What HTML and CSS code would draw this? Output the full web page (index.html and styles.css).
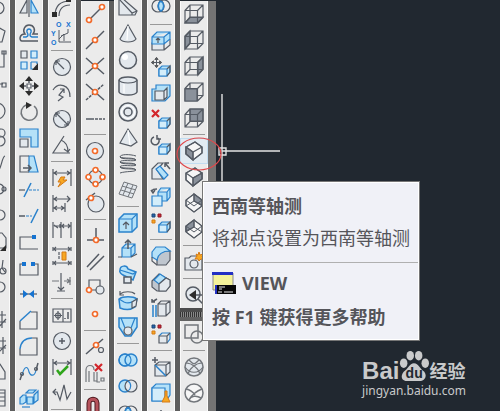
FILE: index.html
```html
<!DOCTYPE html>
<html lang="zh-CN">
<head>
    <meta charset="UTF-8">
    <meta name="viewport" content="width=device-width, initial-scale=1.0">
    <title>西南等轴测</title>
    <link rel="stylesheet" href="styles.css">
</head>
<body>
    <!-- shapes shared by several buttons -->
    <svg class="shapes" aria-hidden="true">
        <symbol id="cube" viewBox="0 0 20 20"><path d="M1 6.500H13.500V19H1ZM6 1H19V13.500H6ZM1 6.500L6 1M13.500 6.500L19 1M13.500 19L19 13.500M1 19L6 13.500"/></symbol>
        <symbol id="iso" viewBox="0 0 20 20"><path d="M11 1L18 6V12L9 19L2 13V6ZM2 6L9 11L18 6M9 11V19"/></symbol>
        <symbol id="box" viewBox="0 0 20 20"><path class="sky blue" d="M8 12L11 9H19V15L16 19H8Z"/><path class="ice" d="M8 12H16V19H8Z"/><path d="M16 12L19 9V15L16 19"/></symbol>
        <symbol id="squares" viewBox="0 0 20 20"><path class="navy" d="M1 1H4V4H1Z"/><path class="crimson" d="M7 1H10V4H7Z"/><path class="amber" d="M1 7H4V10H1Z"/></symbol>
        <symbol id="move" viewBox="0 0 20 20"><path class="bold" d="M10 2V7M10 13V18M2 10H7M13 10H18"/><path class="solid" d="M6 5L10 0L14 5ZM6 15L10 20L14 15ZM5 6L0 10L5 14ZM15 6L20 10L15 14Z"/></symbol>
    </svg>

    <main class="workspace">
        <nav class="toolbar first" aria-label="绘图">
            <button class="tool" aria-label="圆"><svg viewBox="0 0 20 20"><circle cx="12" cy="10" r="6"/></svg></button>
            <button class="tool" aria-label="多边形"><svg viewBox="0 0 20 20"><path d="M10 2L19 7L16 18H4L1 7Z"/></svg></button>
            <button class="tool" aria-label="多段线"><svg viewBox="0 0 20 20"><path d="M18 1V17H10M16 1H20V4H16Z"/></svg></button>
            <button class="tool" aria-label="矩形"><svg viewBox="0 0 20 20"><path d="M8 8H17M16 7H20V11H16Z"/></svg></button>
            <button class="tool" aria-label="圆弧"><svg viewBox="0 0 20 20"><circle cx="11" cy="9" r="8"/></svg></button>
            <button class="tool" aria-label="修订云线"><svg viewBox="0 0 20 20"><circle cx="15" cy="5" r="4"/><circle cx="14" cy="13" r="5"/></svg></button>
            <button class="tool" aria-label="样条曲线"><svg viewBox="0 0 20 20"><path d="M8 18C16 20 15 3 19 2"/></svg></button>
            <button class="tool" aria-label="椭圆"><svg viewBox="0 0 20 20"><circle cx="13" cy="9" r="5"/><circle cx="18" cy="9" r="2"/></svg></button>
            <button class="tool" aria-label="椭圆弧"><svg viewBox="0 0 20 20"><circle cx="14" cy="9" r="5"/></svg></button>
            <button class="tool" aria-label="插入块"><svg viewBox="0 0 20 20"><path d="M10 1H16L20 6V16H10Z"/><path class="solid" d="M14 19L20 13V19Z"/></svg></button>
            <button class="tool" aria-label="创建块"><svg viewBox="0 0 20 20"><path d="M17 2L16 10L19 14"/><circle cx="17" cy="13" r="3"/></svg></button>
            <button class="tool" aria-label="点"><svg viewBox="0 0 20 20"><circle cx="14" cy="3" r="5"/></svg></button>
            <button class="tool" aria-label="图案填充"><svg viewBox="0 0 20 20"><path d="M12 5H20M12 12H20M16 1V18M12 18L20 9"/></svg></button>
            <button class="tool" aria-label="渐变色"><svg viewBox="0 0 20 20"><path d="M12 5H20M12 12H20M17 1V18M12 17L20 9"/></svg></button>
            <button class="tool" aria-label="面域"><svg viewBox="0 0 20 20"><path d="M10 2H14L19 10V17H10"/></svg></button>
            <button class="tool" aria-label="表格"><svg viewBox="0 0 20 20"><path d="M8 2H19V18H8M8 5H19M8 9H19M8 13H19M13 5V18"/></svg></button>
        </nav>

        <nav class="toolbar" aria-label="修改">
            <button class="tool" aria-label="镜像"><svg viewBox="0 0 20 20"><path class="pale" d="M8 2V15H1Z"/><path class="sky blue" d="M12 2V15H19Z"/><path d="M10 0V19"/></svg></button>
            <button class="tool" aria-label="偏移"><svg viewBox="0 0 20 20"><path class="bold" d="M3 17C0 17 0 10 6 10C3 6 6 1 10 1C15 1 17 6 14 10H19M3 17H19"/><path class="blue bold" d="M19 13H13C10 12 11 10 12 8C13 4 7 4 8 8C9 10 10 12 7 13H4"/></svg></button>
            <button class="tool" aria-label="阵列"><svg viewBox="0 0 20 20"><path class="pale" d="M2 1H8V8H2Z"/><path class="ice" d="M12 1H18V8H12ZM2 12H8V19H2Z"/><path class="blue" d="M12 12H18V14M12 12V19H14"/><path class="solid" d="M19 13V20H13Z"/></svg></button>
            <button class="tool" aria-label="移动"><svg viewBox="0 0 20 20"><use href="#move"/><path class="paper" d="M8 8H12V12H8Z"/></svg></button>
            <button class="tool" aria-label="旋转"><svg viewBox="0 0 20 20"><path class="grey bold" d="M7 3A8 8 0 1 0 15 4"/><path class="solid" d="M7 0L13 3L7 7Z"/></svg></button>
            <button class="tool" aria-label="缩放"><svg viewBox="0 0 20 20"><path class="sky blue" d="M1 1H19V19H12V9H1Z"/><path class="pale" d="M1 11H9V19H1Z"/></svg></button>
            <button class="tool" aria-label="拉伸"><svg viewBox="0 0 20 20"><path class="sky blue" d="M10 2H15L19 18H10Z"/><path d="M10 18H1V2H10"/><path class="bold" d="M4 14H12M9 11L12 14L9 17"/></svg></button>
            <button class="tool" aria-label="修剪"><svg viewBox="0 0 20 20"><path d="M0 10H6"/><path class="blue bold" d="M5 17L12 3"/><path class="blue dash" d="M10 10H20"/></svg></button>
            <button class="tool" aria-label="延伸"><svg viewBox="0 0 20 20"><path class="bold" d="M0 10H6"/><path class="blue dash" d="M7 10H13"/><path class="blue bold" d="M12 17L19 3"/></svg></button>
            <button class="tool" aria-label="打断于点"><svg viewBox="0 0 20 20"><path d="M15 5H1V17H19"/><path class="bluefill" d="M13 3H17V7H13Z"/></svg></button>
            <button class="tool" aria-label="打断"><svg viewBox="0 0 20 20"><path d="M4 6H1V17H19V6H15"/><path class="bluefill" d="M3 4H7V8H3ZM12 4H16V8H12Z"/></svg></button>
            <button class="tool" aria-label="合并"><svg viewBox="0 0 20 20"><path d="M1 10H18"/><path class="bluefill" d="M4 6L9 10L4 14ZM15 6L10 10L15 14Z"/></svg></button>
            <button class="tool" aria-label="倒角"><svg viewBox="0 0 20 20"><path d="M1 11V19H18V2H12"/><path class="blue bold" d="M1 11L12 1"/></svg></button>
            <button class="tool" aria-label="圆角"><svg viewBox="0 0 20 20"><path d="M1 13V19H18V2H13"/><path class="blue bold" d="M1 13C2 5 6 2 13 2"/></svg></button>
            <button class="tool" aria-label="光顺曲线"><svg viewBox="0 0 20 20"><path class="blue" d="M3 13C6 2 9 5 10 10C12 15 16 14 17 8"/><path class="bold" d="M1 18L3 12M17 8L19 1"/><circle cx="3" cy="12" r="1.500"/><circle cx="17" cy="7" r="1.500"/></svg></button>
            <button class="tool" aria-label="分解"><svg viewBox="0 0 20 20"><path class="sky blue" d="M1 10L4 7H7V14L4 16H1ZM7 5L10 2H17L14 5ZM8 9H14V16H8ZM15 7L19 3V12L15 15Z"/><path class="blue" d="M3 19H11"/></svg></button>
        </nav>

        <nav class="toolbar" aria-label="标注">
            <button class="tool" aria-label="弧长"><svg viewBox="0 0 20 20"><path d="M3 18C3 8 8 3 18 3M7 18C7 11 11 7 18 7"/><path class="solid" d="M0 14H5V19H0ZM14 0H19V4H14Z"/></svg></button>
            <button class="tool" aria-label="坐标"><svg viewBox="0 0 20 20"><path class="thin" d="M7 6V18H19M7 15L12 10V17M9 12L16 9V5"/><text x="4" y="3">O</text><text x="14" y="3">X</text><text x="-1" y="12">Y</text><text x="-1" y="21">O</text></svg></button>
            <hr>
            <button class="tool" aria-label="半径"><svg viewBox="0 0 20 20"><circle class="pale" cx="10" cy="10" r="8.500"/><path d="M12 12L4 4M4 8V4H8"/></svg></button>
            <button class="tool" aria-label="折弯"><svg viewBox="0 0 20 20"><path d="M1 7C6 -1 18 1 18 14"/><path d="M6 18L11 14L7 12L12 6M8 6H12V10"/></svg></button>
            <button class="tool" aria-label="直径"><svg viewBox="0 0 20 20"><circle class="pale" cx="10" cy="10" r="8.500"/><path d="M4 4L16 16M4 8V4H8M16 12V16H12"/></svg></button>
            <button class="tool" aria-label="角度"><svg viewBox="0 0 20 20"><path d="M18 18H1L12 1M9 5C14 7 16 12 16 17M12 14L16 17L18 14"/></svg></button>
            <hr>
            <button class="tool" aria-label="快速标注"><svg viewBox="0 0 20 20"><path d="M1 1V18M19 1V18M2 5H18M5 3L2 5L5 7M15 3L18 5L15 7"/><path class="amber" d="M9 9H13L11 12H15L6 19L9 14H6Z"/></svg></button>
            <button class="tool" aria-label="基线"><svg viewBox="0 0 20 20"><path d="M1 1V18M2 5H18M15 2L18 5L15 8M5 3L2 5L5 7M13 9V18M2 14H12M5 12L2 14L5 16M9 12L12 14L9 16"/></svg></button>
            <button class="tool" aria-label="连续"><svg viewBox="0 0 20 20"><path d="M1 2V18M9 2V18M19 2V18M2 6H18M2 5L6 8M8 4V8M12 4L10 6L12 8M16 4L18 6L16 8"/></svg></button>
            <button class="tool" aria-label="等距标注"><svg viewBox="0 0 20 20"><path d="M1 1V5M19 1V5M1 3H19M4 1L2 3L4 5M16 1L18 3L16 5M1 15V19M19 15V19M1 17H19M4 15L2 17L4 19M16 15L18 17L16 19"/><path class="dash" d="M7 6V14"/><path class="amber" d="M10 6H14V14H10Z"/></svg></button>
            <button class="tool" aria-label="折断标注"><svg viewBox="0 0 20 20"><path class="grey" d="M0 9H7M12 9H19M18 5V13M15 7L18 9L15 11"/><path d="M9 1V19M6 15L9 18L12 15M5 19H13"/></svg></button>
            <hr>
            <button class="tool" aria-label="公差"><svg viewBox="0 0 20 20"><path d="M1 4H19V17H1ZM11 4V17"/><circle cx="6" cy="10.500" r="2.500"/><path d="M2 10.500H10M6 6V15"/><path class="bold" d="M13 13V14M16 7V14"/></svg></button>
            <button class="tool" aria-label="圆心标记"><svg viewBox="0 0 20 20"><circle class="pale" cx="10" cy="10" r="8.500"/><path class="bold" d="M7 10H13M10 7V13"/></svg></button>
            <button class="tool" aria-label="检验"><svg viewBox="0 0 20 20"><path d="M1 2V18M19 2V18M2 6H18M5 4L2 6L5 8M15 4L18 6L15 8"/><path class="tick" d="M5 13L8 17L16 9"/></svg></button>
            <button class="tool" aria-label="折弯线性"><svg viewBox="0 0 20 20"><path d="M1 9H5L8 17L12 2L15 16L19 9M4 6L1 9L4 12"/></svg></button>
            <hr>
        </nav>

        <nav class="toolbar low" aria-label="对象捕捉">
            <button class="tool" aria-label="捕捉到端点"><svg viewBox="0 0 20 20"><path class="bold" d="M4 16L16 4"/><circle class="snap" cx="4" cy="16" r="2.500"/><circle class="snap" cx="17" cy="3" r="2.500"/></svg></button>
            <button class="tool" aria-label="捕捉到中点"><svg viewBox="0 0 20 20"><path class="bold" d="M1 19L19 1"/><circle class="snap" cx="10" cy="10" r="2.500"/></svg></button>
            <button class="tool" aria-label="捕捉到交点"><svg viewBox="0 0 20 20"><path class="bold" d="M1 18L19 2M1 2L19 18"/><circle class="snap" cx="10" cy="10" r="2.500"/></svg></button>
            <button class="tool" aria-label="捕捉到外观交点"><svg viewBox="0 0 20 20"><path class="bold" d="M1 2L19 18"/><path class="bold dash" d="M1 18L19 2"/><circle class="snap" cx="10" cy="10" r="2.500"/></svg></button>
            <button class="tool" aria-label="捕捉到延长线"><svg viewBox="0 0 20 20"><path class="bold" d="M1 11H9"/><path class="bold dash" d="M10 11H20"/></svg></button>
            <hr>
            <button class="tool" aria-label="捕捉到圆心"><svg viewBox="0 0 20 20"><circle class="pale" cx="10" cy="10" r="8.500"/><circle class="snap" cx="10" cy="10" r="2.500"/></svg></button>
            <button class="tool" aria-label="捕捉到象限点"><svg viewBox="0 0 20 20"><circle class="pale" cx="10.500" cy="10" r="7"/><circle class="snap" cx="10.500" cy="3" r="2.500"/><circle class="snap" cx="3.500" cy="10" r="2.500"/><circle class="snap" cx="17.500" cy="10" r="2.500"/><circle class="snap" cx="10.500" cy="17" r="2.500"/></svg></button>
            <button class="tool" aria-label="捕捉到切点"><svg viewBox="0 0 20 20"><circle class="pale" cx="11" cy="11" r="8"/><path class="bold" d="M1 7L10 0"/><circle class="snap" cx="6" cy="5" r="2.500"/></svg></button>
            <hr>
            <button class="tool" aria-label="捕捉到垂足"><svg viewBox="0 0 20 20"><path class="bold" d="M2 14H19M11 2V14"/><circle class="snap" cx="11" cy="14" r="2.500"/></svg></button>
            <button class="tool" aria-label="捕捉到平行线"><svg viewBox="0 0 20 20"><path class="bold" d="M2 15L14 2M5 18L19 4"/></svg></button>
            <button class="tool" aria-label="捕捉到插入点"><svg viewBox="0 0 20 20"><path d="M4 12V2H15V12Z"/><circle class="pale" cx="15" cy="12" r="4"/><circle class="snap" cx="4" cy="12" r="2.500"/></svg></button>
            <button class="tool" aria-label="捕捉到节点"><svg viewBox="0 0 20 20"><circle class="snap" cx="10" cy="10" r="2.500"/></svg></button>
            <hr>
            <button class="tool" aria-label="捕捉到最近点"><svg viewBox="0 0 20 20"><path class="bold" d="M1 17L18 2"/><circle class="snap" cx="11" cy="8" r="2.500"/><circle cx="16" cy="13" r="2.500"/></svg></button>
            <button class="tool" aria-label="无捕捉"><svg viewBox="0 0 20 20"><path class="grey" d="M1 19V7C1 1 9 1 9 7M4 19V8M9 9V18H12V9M12 14V19H15M16 15H19V18H16Z"/><path class="cross" d="M10 1L17 8M17 1L10 8"/></svg></button>
            <hr>
            <button class="tool" aria-label="对象捕捉设置"><svg viewBox="0 0 20 20"><path class="magnet edge" d="M4 20V7C4 2 12 2 12 7V20"/><path class="magnet" d="M4 20V7C4 2 12 2 12 7V20"/></svg></button>
        </nav>

        <nav class="toolbar" aria-label="建模">
            <button class="tool" aria-label="楔体"><svg viewBox="0 0 20 20"><path class="pale" d="M1 1L4 0L19 13L17 17H1Z"/><path d="M1 1L14 15L19 13M14 15V17"/></svg></button>
            <button class="tool" aria-label="圆锥体"><svg viewBox="0 0 20 20"><path class="pale" d="M10 1L18 15C15 19 5 19 2 15Z"/><path class="white" d="M10 2L9 16"/></svg></button>
            <button class="tool" aria-label="球体"><svg viewBox="0 0 20 20"><circle class="pale bold" cx="10" cy="10" r="8.500"/><circle class="glow" cx="7" cy="7" r="3"/></svg></button>
            <button class="tool" aria-label="圆柱体"><svg viewBox="0 0 20 20"><path class="pale bold" d="M1 4C3 0 17 0 19 4V16C17 20 3 20 1 16Z"/><path d="M1 4C3 8 17 8 19 4"/><path class="white" d="M6 8V17"/></svg></button>
            <button class="tool" aria-label="圆环体"><svg viewBox="0 0 20 20"><circle class="pale bold" cx="10" cy="10" r="9"/><circle class="bold" cx="10" cy="10" r="4"/><circle class="white" cx="10" cy="10" r="6.500"/></svg></button>
            <button class="tool" aria-label="棱锥体"><svg viewBox="0 0 20 20"><path class="pale" d="M10 1L19 14L13 18L2 15Z"/><path class="white" d="M10 2L12 17"/></svg></button>
            <button class="tool" aria-label="螺旋"><svg viewBox="0 0 20 20"><path class="thin" d="M18 2C12 0 2 0 2 3C3 6 18 4 18 6C17 8 2 5 2 8C3 11 18 9 18 11C17 13 2 10 2 13C3 16 18 14 18 16C17 18 8 17 2 19M2 3C6 5 16 3 18 6M2 8C6 10 16 8 18 11M2 13C6 15 16 13 18 16"/></svg></button>
            <button class="tool" aria-label="平面曲面"><svg viewBox="0 0 20 20"><path class="pale grey thin" d="M6 2L19 6L14 18L1 14ZM10 3L5 15M15 5L10 17M4 6L18 10M3 10L16 14"/></svg></button>
            <hr>
            <button class="tool" aria-label="拉伸实体"><svg viewBox="0 0 20 20"><path class="sky blue bold" d="M1 6L6 1H19V14L14 19H1Z"/><path class="blue" d="M1 6H14L19 1M14 6V19"/><path d="M8 16V9M5 12L8 9L11 12"/></svg></button>
            <button class="tool" aria-label="按住并拖动"><svg viewBox="0 0 20 20"><path class="sky blue" d="M4 9L8 5H17V14L13 18H4ZM4 9H13L17 5M13 9V18"/><path d="M0 18H4M13 18L19 15"/><path class="bold" d="M10 10V2M7 4L10 1L13 4"/></svg></button>
            <button class="tool" aria-label="扫掠"><svg viewBox="0 0 20 20"><path class="sky blue bold" d="M2 5C2 0 9 0 10 4L18 7L15 15L5 10C3 9 1 7 2 5Z"/><path class="blue" d="M2 5L15 9L18 7"/><path class="pale bold" d="M6 12H13V18H6Z"/></svg></button>
            <button class="tool" aria-label="旋转实体"><svg viewBox="0 0 20 20"><path d="M2 3C6 0 14 0 17 3M2 0V4H6"/><path class="sky blue bold" d="M1 8C5 5 15 5 19 8L17 16C13 19 7 19 2 17Z"/><path class="blue" d="M1 8L6 11C10 13 14 12 19 8"/><path class="pale" d="M14 11L19 8L18 15L14 17Z"/></svg></button>
            <button class="tool" aria-label="放样"><svg viewBox="0 0 20 20"><path class="sky blue bold" d="M1 1H19V10L13 19H7L1 10Z"/><path class="blue" d="M3 1L7 11M17 1L13 11"/><circle class="pale" cx="10" cy="14" r="4"/></svg></button>
            <hr>
            <button class="tool" aria-label="并集"><svg viewBox="0 0 20 20"><circle class="sky blue bold" cx="7" cy="10" r="6"/><circle class="sky blue bold" cx="13" cy="10" r="6"/><circle class="blue" cx="7" cy="10" r="6"/></svg></button>
            <button class="tool" aria-label="差集"><svg viewBox="0 0 20 20"><circle class="sky blue bold" cx="7" cy="10" r="6"/><circle class="pale" cx="13" cy="10" r="6"/><path class="blue" d="M10 5A6 6 0 0 1 10 15"/></svg></button>
            <button class="tool" aria-label="交集"><svg viewBox="0 0 20 20"><circle cx="7" cy="10" r="6"/><circle cx="13" cy="10" r="6"/><path class="sky blue bold" d="M10 5A6 6 0 0 1 10 15A6 6 0 0 1 10 5"/></svg></button>
        </nav>

        <nav class="toolbar" aria-label="实体编辑">
            <button class="tool" aria-label="交集"><svg viewBox="0 0 20 20"><circle cx="7" cy="8" r="6"/><circle cx="13" cy="8" r="6"/><path class="sky blue bold" d="M10 3A6 6 0 0 1 10 13A6 6 0 0 1 10 3"/></svg></button>
            <hr>
            <button class="tool" aria-label="拉伸面"><svg viewBox="0 0 20 20"><path class="pale" d="M1 12H13V19H1ZM13 19L19 14V8"/><path class="sky blue" d="M1 6L6 1H19V8L13 13H1ZM1 6H13L19 1M13 6V13"/><path d="M7 12V7M5 9L7 7L9 9"/></svg></button>
            <button class="tool" aria-label="移动面"><svg viewBox="0 0 20 20"><use href="#move" width="11" height="11"/><path class="thin" d="M5.500 1V10M1 5.500H10"/><use href="#box"/></svg></button>
            <button class="tool" aria-label="偏移面"><svg viewBox="0 0 20 20"><path class="sky blue" d="M1 6H5V2H19V13L14 18H1Z"/><path class="pale" d="M4 8H13V17H4ZM13 8L16 5V14L13 17"/></svg></button>
            <button class="tool" aria-label="删除面"><svg viewBox="0 0 20 20"><path class="cross" d="M1 1L8 8M8 1L1 8"/><use href="#box"/></svg></button>
            <button class="tool" aria-label="旋转面"><svg viewBox="0 0 20 20"><path class="bold" d="M3 2A4 4 0 1 0 7 3M6 0V4H10"/><use href="#box"/></svg></button>
            <button class="tool" aria-label="倾斜面"><svg viewBox="0 0 20 20"><path class="pale" d="M1 8L7 2H12L6 9L12 18H1Z"/><path class="sky blue" d="M5 8L9 5L17 14L13 18Z"/><path class="bold" d="M19 8L14 2M14 6V2H18"/></svg></button>
            <button class="tool" aria-label="复制面"><svg viewBox="0 0 20 20"><path class="sky blue" d="M7 5L10 1H19V10L16 14H7ZM7 5H16L19 1M16 5V14"/><path class="ice" d="M1 9H11V19H1Z"/><path class="bold" d="M1 5C1 2 3 2 6 2M0 3L2 6L4 3"/></svg></button>
            <button class="tool" aria-label="着色面"><svg viewBox="0 0 20 20"><use href="#squares"/><use href="#box"/></svg></button>
            <hr>
            <button class="tool" aria-label="圆角边"><svg viewBox="0 0 20 20"><path class="shade" d="M6 19V12C6 7 10 5 19 5V14L15 19Z"/><path class="sky blue" d="M1 6L5 1H14L19 5C12 5 7 8 6 14L1 11Z"/><path d="M1 11V15L6 19"/></svg></button>
            <button class="tool" aria-label="倒角边"><svg viewBox="0 0 20 20"><path class="shade" d="M1 9L8 2L19 8V14L15 19H6L1 15Z"/><path class="sky blue" d="M3 8L9 2L15 6L8 12Z"/><path class="pale" d="M8 12L15 6L19 8V14L15 19H8Z"/></svg></button>
            <button class="tool" aria-label="复制边"><svg viewBox="0 0 20 20"><path class="pale" d="M7 6L10 3H19V14L15 18H7ZM7 6H15L19 3M15 6V18"/><path class="blue bold" d="M2 7V19M5 7V19"/><path class="bold" d="M1 1V4H4M1 4L6 1"/></svg></button>
            <button class="tool" aria-label="着色边"><svg viewBox="0 0 20 20"><use href="#squares"/><path class="blue" d="M8 12L11 9H19V15L16 19"/><path class="pale" d="M8 12H16V19H8ZM16 12L19 9"/></svg></button>
            <hr>
            <button class="tool" aria-label="压印"><svg viewBox="0 0 20 20"><path class="pale" d="M4 8L8 5H19V15L15 19H4ZM4 8H15L19 5M15 8V19"/><path class="blue bold" d="M4 8L15 19"/><path class="bold" d="M1 3H7M4 0V6"/></svg></button>
            <button class="tool" aria-label="清除"><svg viewBox="0 0 20 20"><path class="sky blue" d="M1 5L5 1H19V12L15 18H1Z"/><path class="ice" d="M1 5H14V18H1Z"/><path class="amber" d="M14 8H16V13L19 19H11L14 13Z"/></svg></button>
            <button class="tool" aria-label="分割"><svg viewBox="0 0 20 20"><path class="bold" d="M10 1V8"/></svg></button>
        </nav>

        <nav class="toolbar low" aria-label="视图">
            <button class="tool" aria-label="仰视"><svg viewBox="0 0 20 20"><path class="face" d="M1 19L6 13H19L14 19Z"/><use href="#cube"/></svg></button>
            <button class="tool" aria-label="左视"><svg viewBox="0 0 20 20"><path class="face" d="M1 6L6 1V13L1 19Z"/><use href="#cube"/></svg></button>
            <button class="tool" aria-label="右视"><svg viewBox="0 0 20 20"><path class="face" d="M14 6L19 1V13L14 19Z"/><use href="#cube"/></svg></button>
            <button class="tool" aria-label="前视"><svg viewBox="0 0 20 20"><use href="#cube"/><path class="face" d="M1 7H13V19H1Z"/></svg></button>
            <button class="tool" aria-label="后视"><svg viewBox="0 0 20 20"><path class="face" d="M6 1H19V13H6Z"/><use href="#cube"/></svg></button>
            <hr>
            <button class="tool active" aria-label="西南等轴测" aria-describedby="tip"><svg viewBox="0 0 20 20"><path class="paper" d="M11 1L18 6V12L9 19L2 13V6Z"/><path class="face" d="M2 6L9 11V19L2 13Z"/><use href="#iso"/></svg></button>
            <button class="tool" aria-label="东南等轴测"><svg viewBox="0 0 20 20"><path class="paper" d="M11 1L18 6V12L9 19L2 13V6Z"/><path class="face" d="M9 11L18 6V12L9 19Z"/><use href="#iso"/></svg></button>
            <button class="tool" aria-label="东北等轴测"><svg viewBox="0 0 20 20"><path class="paper" d="M10 1L18 7V13L10 19L2 13V7Z"/><path class="face" d="M10 1L18 7V12L10 8Z"/><path class="thin" d="M10 1L18 7V13L10 19L2 13V7ZM2 13L10 8L18 13M10 1V8M2 7L10 13L18 7"/></svg></button>
            <button class="tool" aria-label="西北等轴测"><svg viewBox="0 0 20 20"><path class="paper" d="M10 1L18 7V13L10 19L2 13V7Z"/><path class="face" d="M10 1L2 7V12L10 8Z"/><path class="thin" d="M10 1L18 7V13L10 19L2 13V7ZM2 13L10 8L18 13M10 1V8M2 7L10 13L18 7"/></svg></button>
            <hr>
            <button class="tool" aria-label="创建相机"><svg viewBox="0 0 20 20"><path class="pale" d="M1 6H5L7 4H13L14 6H18V18H1Z"/><circle cx="10" cy="12" r="4"/><path class="amber" d="M15 0L16 3L19 2L18 5L20 7L17 7L15 9L14 7L11 7L13 4L12 2L14 3Z"/></svg></button>
            <hr>
            <button class="tool" aria-label="上一个视图"><svg viewBox="0 0 20 20"><circle class="pale bold" cx="9" cy="9" r="7"/><path class="bold" d="M14 14L19 19M8 10H19"/><path class="solid" d="M5 10L12 5V15Z"/></svg></button>
            <div class="grip"></div>
            <button class="tool" aria-label="二维线框"><svg viewBox="0 0 20 20"><path class="grey bold" d="M1 1H14V14H1Z"/><circle class="grey bold" cx="13" cy="13" r="6"/></svg></button>
            <hr>
            <button class="tool" aria-label="三维线框"><svg viewBox="0 0 20 20"><circle class="pale grey bold" cx="10" cy="10" r="9"/><path class="grey" d="M2 6C8 6 15 12 16 17M18 6C12 6 5 12 4 17M1 10C6 17 14 17 19 10M5 3C10 8 10 8 15 3"/></svg></button>
            <button class="tool" aria-label="三维隐藏"><svg viewBox="0 0 20 20"><circle class="paper grey bold" cx="10" cy="10" r="9"/><path class="grey bold" d="M2 6C7 7 9 9 11 12M18 6C12 8 8 12 5 17M5 17C7 13 12 12 17 15"/></svg></button>
        </nav>

        <section class="canvas" aria-label="绘图区">
            <svg class="cursor" viewBox="0 0 62 120"><path d="M4 0V120M4 57H62M1 54H8V61H1Z"/></svg>
            <div class="watermark">
                <div class="brand">
                    <span class="bai">Bai</span>
                    <svg class="paw" viewBox="0 0 32 34">
                        <ellipse cx="5" cy="14" rx="4" ry="5"/>
                        <ellipse cx="12" cy="6" rx="4" ry="5"/>
                        <ellipse cx="21" cy="6" rx="4" ry="5"/>
                        <ellipse cx="28" cy="14" rx="4" ry="5"/>
                        <path d="M16 14C21 14 22 20 27 23C31 29 26 33 22 33H9C3 33 1 28 5 23C10 20 11 14 16 14Z"/>
                        <text x="7" y="30">du</text>
                    </svg>
                    <span class="word">经验</span>
                </div>
                <div class="site">jingyan.baidu.com</div>
            </div>
        </section>

        <svg class="marker" viewBox="0 0 46 36"><ellipse cx="23" cy="18" rx="22" ry="16"/></svg>

        <aside class="tooltip" id="tip" role="tooltip">
            <div class="about">
                <h1>西南等轴测</h1>
                <p>将视点设置为西南等轴测</p>
            </div>
            <div class="command">
                <div class="name">
                    <svg viewBox="0 0 24 22"><path class="window" d="M1 1H21V18H1Z"/><path class="title" d="M0 0H21V3H0Z"/><path class="console" d="M3 13H24V22H3Z"/><path class="title" d="M3 13H5V22H3Z"/><path class="lines" d="M7 15H13M7 17H10M6 20H10M12 20H21"/></svg>
                    <strong>VIEW</strong>
                </div>
                <p>按 F1 键获得更多帮助</p>
            </div>
        </aside>
    </main>
</body>
</html>
```
FILE: styles.css
```css
* {
    box-sizing: border-box;
}

body {
    margin: 0;
    background: #212830;
    font-family: "Open Sans", "Noto Sans CJK SC", sans-serif;
}

.shapes {
    position: absolute;
    width: 0;
    height: 0;
}

.workspace {
    position: relative;
    display: flex;
    height: 100vh;
    overflow: hidden;
}

/* toolbars */
.toolbar {
    flex: none;
    box-sizing: content-box;
    width: 28px;
    margin-top: -5px;
    background: #ebebeb;
    border-right: 5px solid #5e5e5e;
    box-shadow: inset 1px 0 #fafafa, inset -1px 0 #fafafa;
}

.toolbar.first {
    margin-left: -18px;
}

.toolbar.low {
    margin-top: 1px;
}

.toolbar:nth-of-type(7) {
    border-right: 8px solid #747474;
}

.toolbar hr {
    height: 1px;
    margin: 3px;
    border: none;
    background: #999999;
}

.tool {
    display: flex;
    align-items: center;
    justify-content: center;
    width: 28px;
    height: 26px;
    padding: 0;
    border: 1px solid transparent;
    background: none;
}

.tool.active {
    border-color: #c2dcf0;
    background: #e2ebf2;
}

.grip {
    height: 13px;
    border-top: 4px solid #4c4c4c;
    border-bottom: 4px solid #626262;
    background: repeating-linear-gradient(90deg, #333333 0 1px, #888888 1px 2px);
}

/* icons */
.tool svg {
    width: 20px;
    height: 20px;
    overflow: visible;
    fill: none;
    stroke: #555b64;
    stroke-width: 1.2;
}

.tool text {
    font: bold 7px "Liberation Sans", sans-serif;
    fill: #1673d0;
    stroke: none;
}

.bold { stroke-width: 1.5; }
.thin { stroke-width: 1; }
.dash { stroke-dasharray: 3 1; }
.grey { stroke: #73777c; }
.blue { stroke: #2a82cc; }
.pale { fill: #e3e8ed; }
.paper { fill: #f6f6f6; }
.shade { fill: #bfc6ce; }
.sky { fill: #b4e1f8; }
.ice { fill: #d3edfa; stroke: #2a82cc; }
.face { fill: #8a919b; }
.solid { fill: #2c2c2c; stroke: none; }
.bluefill { fill: #1673d0; stroke: none; }
.glow { fill: #ffffff; stroke: none; }
.white { stroke: #ffffff; }
.navy { fill: #2466ad; stroke: #1d4777; stroke-width: 1; }
.crimson { fill: #d02734; stroke: #8e1c26; stroke-width: 1; }
.amber { fill: #f7a823; stroke: #d67a14; stroke-width: 1; }
.snap { fill: #ffffff; stroke: #f26a2a; stroke-width: 1.7; }
.tick { stroke: #2fa51b; stroke-width: 2.5; }
.cross { stroke: #d3262b; stroke-width: 2.2; }
.magnet { stroke: #b5525b; stroke-width: 3; }
.magnet.edge { stroke: #4d1a20; stroke-width: 5; }

/* drawing area */
.canvas {
    position: relative;
    flex: 1;
    background: #212830;
}

.cursor {
    position: absolute;
    top: 94px;
    left: 2px;
    width: 62px;
    height: 120px;
    fill: none;
    stroke: #e4e4e4;
    stroke-width: 1.4;
}

.marker {
    position: absolute;
    top: 136px;
    left: 176px;
    width: 46px;
    height: 36px;
    fill: none;
    stroke: #e0494c;
    stroke-width: 1.2;
}

/* tooltip */
.tooltip {
    position: absolute;
    top: 181px;
    left: 202px;
    padding: 0 1px;
    border: 1px solid #767676;
    background: #f0f1f7;
    box-shadow: inset 0 0 0 1px #ffffff;
    color: #55555a;
    font-size: 18px;
    line-height: 24px;
    white-space: nowrap;
}

.tooltip h1,
.tooltip p {
    margin: 0;
    font-size: 18px;
}

.about,
.command {
    display: flex;
    flex-direction: column;
    gap: 8px;
    padding: 12px 8px;
}

.about {
    border-bottom: 1px solid #b0b0b0;
}

.command {
    gap: 10px;
    padding: 8px 8px 11px;
}

.command p {
    font-weight: bold;
}

.name {
    display: flex;
    align-items: center;
    gap: 6px;
}

.name svg {
    width: 24px;
    height: 22px;
}

.window { fill: #f5f39a; stroke: #8a8a8a; }
.title { fill: #2330c4; }
.console { fill: #080808; }
.lines { stroke: #e8e8e8; }

/* watermark */
.watermark {
    position: absolute;
    right: 34px;
    bottom: 12px;
    color: #c9cacb;
}

.brand {
    display: flex;
    align-items: flex-end;
}

.bai {
    font: bold 24px/24px "Liberation Sans", sans-serif;
}

.paw {
    width: 30px;
    height: 34px;
    fill: #c9cacb;
}

.paw text {
    font: bold 15px "Liberation Sans", sans-serif;
    fill: #212830;
}

.word {
    font-size: 18px;
    font-weight: bold;
    line-height: 24px;
}

.site {
    font: 12px/16px "Noto Sans", sans-serif;
}
```
